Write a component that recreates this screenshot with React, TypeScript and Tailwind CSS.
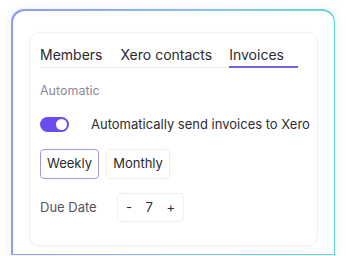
import { useState } from 'react';

export default function App() {
  const [auto, setAuto] = useState(true);
  const [period, setPeriod] = useState<'weekly' | 'monthly'>('weekly');
  const [due, setDue] = useState(7);

  return (
    <div className="w-[346px] h-[256px] bg-white overflow-hidden font-['Inter','Liberation_Sans',sans-serif] whitespace-nowrap">
      <div className="ml-[11px] mt-[9px] w-[324px] h-[246px] rounded-t-[13px] bg-gradient-to-r from-[#8d9cf6] via-[#8fb8ee] to-[#5fd9cc] p-[1.5px] shadow-[0_0_10px_rgba(140,160,240,0.18)]">
        <div className="h-full w-full rounded-t-[12px] bg-white pl-[16.5px] pr-[15.5px] pt-[21.5px]">
          <div className="w-[289px] h-[214px] rounded-[10px] border border-[#f0f0f2] shadow-[0_1px_3px_rgba(0,0,0,0.03)] pl-[10px] pt-[10px]">
            <div className="flex w-[258px] border-b border-[#eeeef0] text-[14px] text-[#2a2a2e] leading-[20px]">
              <button className="pt-[2px] pb-[2px] mr-[18px]">Members</button>
              <button className="pt-[2px] pb-[2px] mr-[17px]">Xero contacts</button>
              <button className="pt-[2px] pb-[1px] w-[69px] text-left border-b-2 border-[#7b5fe0] -mb-px">Invoices</button>
            </div>

            <div className="mt-[14px] text-[12.5px] leading-[18px] text-[#8b889a]">Automatic</div>

            <div className="mt-[15px] flex items-center">
              <button
                onClick={() => setAuto(!auto)}
                className={`w-[29px] h-[15px] rounded-full flex items-center px-[2px] ${auto ? 'bg-[#6b4cf0] justify-end' : 'bg-gray-300 justify-start'}`}
              >
                <span className="w-[11px] h-[11px] rounded-full bg-white" />
              </button>
              <span className="ml-[22px] text-[13px] leading-[18px] text-[#2c2c30]">Automatically send invoices to Xero</span>
            </div>

            <div className="mt-[16px] flex gap-[7px] text-[13px] text-[#2c2c30]">
              <button
                onClick={() => setPeriod('weekly')}
                className={`h-[30px] w-[59px] rounded-[4px] border ${period === 'weekly' ? 'border-[#a596e6]' : 'border-[#efeff1]'}`}
              >
                Weekly
              </button>
              <button
                onClick={() => setPeriod('monthly')}
                className={`h-[30px] w-[64px] rounded-[4px] border ${period === 'monthly' ? 'border-[#a596e6]' : 'border-[#efeff1]'}`}
              >
                Monthly
              </button>
            </div>

            <div className="mt-[14px] flex items-center text-[13px] text-[#55545c]">
              <span className="w-[77px]">Due Date</span>
              <div className="h-[29px] w-[67px] flex items-center justify-between px-[8px] rounded-[4px] border border-[#efeff1] text-[#2c2c30]">
                <button onClick={() => setDue(due - 1)}>-</button>
                <span>{due}</span>
                <button onClick={() => setDue(due + 1)}>+</button>
              </div>
            </div>
          </div>
        </div>
      </div>
    </div>
  );
}
